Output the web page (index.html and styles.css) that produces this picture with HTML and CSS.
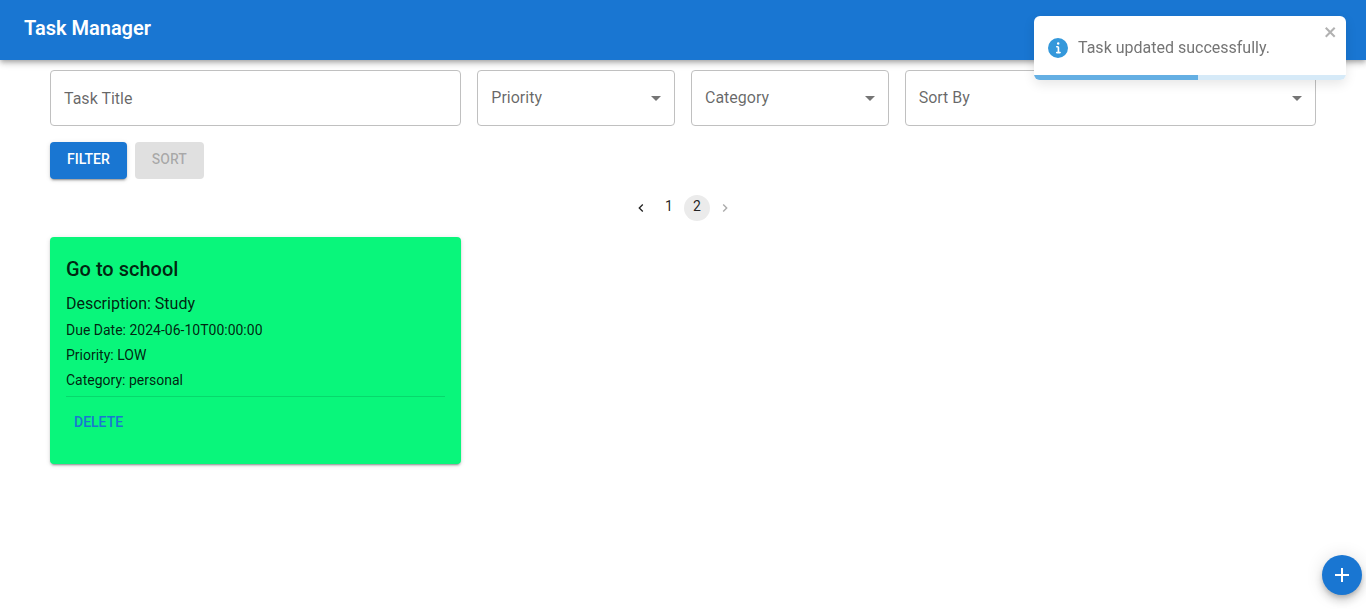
FILE: index.html
```html
<!DOCTYPE html>
<html lang="en">
<head>
<meta charset="utf-8">
<meta name="viewport" content="width=device-width, initial-scale=1">
<title>Task Manager</title>
<link rel="stylesheet" href="styles.css">
</head>
<body>
<header class="app-bar">
  <h1 class="app-title">Task Manager</h1>
</header>

<main class="content">
  <form class="filters">
    <div class="fields">
      <input class="field field-wide" type="text" placeholder="Task Title" aria-label="Task Title">
      <div class="select">
        <select class="field" aria-label="Priority">
          <option>Priority</option>
        </select>
        <svg class="caret" viewBox="0 0 24 24" aria-hidden="true"><path d="M7 10l5 5 5-5z"/></svg>
      </div>
      <div class="select">
        <select class="field" aria-label="Category">
          <option>Category</option>
        </select>
        <svg class="caret" viewBox="0 0 24 24" aria-hidden="true"><path d="M7 10l5 5 5-5z"/></svg>
      </div>
      <div class="select field-wide">
        <select class="field" aria-label="Sort By">
          <option>Sort By</option>
        </select>
        <svg class="caret" viewBox="0 0 24 24" aria-hidden="true"><path d="M7 10l5 5 5-5z"/></svg>
      </div>
    </div>
    <div class="actions">
      <button class="button button-primary" type="button">FILTER</button>
      <button class="button" type="button" disabled>SORT</button>
    </div>
  </form>

  <nav class="pagination" aria-label="Pagination">
    <button class="page" type="button" aria-label="Previous page">
      <svg class="chevron" viewBox="0 0 24 24" aria-hidden="true"><path d="M15.41 7.41L14 6l-6 6 6 6 1.41-1.41L10.83 12z"/></svg>
    </button>
    <button class="page" type="button">1</button>
    <button class="page page-current" type="button" aria-current="page">2</button>
    <button class="page" type="button" aria-label="Next page" disabled>
      <svg class="chevron" viewBox="0 0 24 24" aria-hidden="true"><path d="M10 6L8.59 7.41 13.17 12l-4.58 4.59L10 18l6-6z"/></svg>
    </button>
  </nav>

  <section class="tasks">
    <article class="task">
      <h2 class="task-title">Go to school</h2>
      <p class="task-description">Description: Study</p>
      <p class="task-detail">Due Date: 2024-06-10T00:00:00</p>
      <p class="task-detail">Priority: LOW</p>
      <p class="task-detail">Category: personal</p>
      <div class="task-actions">
        <button class="text-button" type="button">DELETE</button>
      </div>
    </article>
  </section>
</main>

<button class="fab" type="button" aria-label="Add task">
  <svg class="fab-icon" viewBox="0 0 24 24" aria-hidden="true"><path d="M19 13h-6v6h-2v-6H5v-2h6V5h2v6h6v2z"/></svg>
</button>

<div class="toast" role="alert">
  <div class="toast-body">
    <svg class="toast-icon" viewBox="0 0 24 24" aria-hidden="true"><path d="M12 0a12 12 0 1 0 12 12A12.013 12.013 0 0 0 12 0zm.25 5a1.5 1.5 0 1 1-1.5 1.5 1.5 1.5 0 0 1 1.5-1.5zm2.25 13.5h-4a1 1 0 0 1 0-2h.75a.25.25 0 0 0 .25-.25v-4.5a.25.25 0 0 0-.25-.25h-.75a1 1 0 0 1 0-2h1a2 2 0 0 1 2 2v4.75a.25.25 0 0 0 .25.25h.75a1 1 0 1 1 0 2z"/></svg>
    <span>Task updated successfully.</span>
  </div>
  <button class="toast-close" type="button" aria-label="Close">
    <svg class="toast-close-icon" viewBox="0 0 14 16" aria-hidden="true"><path fill-rule="evenodd" d="M7.71 8.23l3.75 3.75-1.48 1.48-3.75-3.75-3.75 3.75L1 11.98l3.75-3.75L1 4.48 2.48 3l3.75 3.75L9.98 3l1.48 1.48-3.75 3.75z"/></svg>
  </button>
  <div class="toast-track"><div class="toast-progress" style="width: 52.5%"></div></div>
</div>
</body>
</html>
```

FILE: styles.css
```css
*,
*::before,
*::after {
  box-sizing: border-box;
}

body {
  margin: 0;
  background: #fff;
  color: rgba(0, 0, 0, 0.87);
  font-family: Roboto, Arial, sans-serif;
  font-size: 16px;
  line-height: 24px;
}

button,
input,
select {
  font: inherit;
}

button {
  padding: 0;
  border: 0;
  background: none;
  color: inherit;
  cursor: pointer;
}

button:disabled {
  cursor: default;
}

.app-bar {
  padding: 12px 24px 16px;
  background: #1976d2;
  color: #fff;
  box-shadow: 0 2px 4px -1px rgba(0, 0, 0, 0.2), 0 4px 5px rgba(0, 0, 0, 0.14), 0 1px 10px rgba(0, 0, 0, 0.12);
}

.app-title {
  margin: 0;
  font-size: 20px;
  font-weight: 600;
  line-height: 32px;
}

.content {
  padding: 10px 50px 32px;
}

.fields {
  display: grid;
  grid-template-columns: repeat(12, 1fr);
  gap: 16px;
}

.select {
  position: relative;
  grid-column: span 2;
}

.fields > .field-wide {
  grid-column: span 4;
}

.field {
  display: block;
  width: 100%;
  height: 56px;
  padding: 0 32px 0 13px;
  border: 1px solid #c0c0c0;
  border-radius: 4px;
  background: #fff;
  color: rgba(0, 0, 0, 0.6);
  appearance: none;
}

.field::placeholder {
  color: rgba(0, 0, 0, 0.6);
  opacity: 1;
}

.caret {
  position: absolute;
  top: 16px;
  right: 7px;
  width: 24px;
  height: 24px;
  fill: rgba(0, 0, 0, 0.54);
  pointer-events: none;
}

.actions {
  display: flex;
  gap: 8px;
  margin-top: 16px;
}

.button {
  padding: 5px 17px 8px;
  border-radius: 4px;
  background: #e0e0e0;
  color: rgba(0, 0, 0, 0.26);
  font-size: 14px;
  font-weight: 500;
}

.button-primary {
  background: #1976d2;
  color: #fff;
  box-shadow: 0 3px 1px -2px rgba(0, 0, 0, 0.2), 0 2px 2px rgba(0, 0, 0, 0.14), 0 1px 5px rgba(0, 0, 0, 0.12);
}

.pagination {
  display: flex;
  justify-content: center;
  gap: 2px;
  margin-top: 16px;
}

.page {
  display: grid;
  place-items: center;
  width: 26px;
  height: 26px;
  padding-bottom: 4px;
  border-radius: 13px;
  font-size: 14px;
  line-height: 20px;
}

.page-current {
  background: #ebebeb;
}

.page:disabled {
  opacity: 0.38;
}

.page:has(.chevron) {
  padding: 0;
}

.chevron {
  width: 16px;
  height: 16px;
  fill: currentColor;
}

.tasks {
  display: grid;
  grid-template-columns: repeat(3, 1fr);
  gap: 16px;
  margin-top: 16px;
}

.task {
  padding: 16px 16px 24px;
  border-radius: 4px;
  background: #09f67b;
  box-shadow: 0 3px 1px -2px rgba(0, 0, 0, 0.2), 0 2px 2px rgba(0, 0, 0, 0.14), 0 1px 5px rgba(0, 0, 0, 0.12);
}

.task-title {
  margin: 0 0 7px;
  font-size: 20px;
  font-weight: 500;
  line-height: 32px;
}

.task-description {
  margin: 0 0 2px;
}

.task-detail {
  margin: 0;
  font-size: 14px;
  line-height: 25px;
}

.task-actions {
  margin-top: 3px;
  padding-top: 7px;
  border-top: 1px solid rgba(0, 0, 0, 0.12);
}

.text-button {
  padding: 6px 8px;
  border-radius: 4px;
  color: #1976d2;
  font-size: 14px;
  font-weight: 500;
}

.fab {
  position: fixed;
  right: 4px;
  bottom: 14px;
  display: grid;
  place-items: center;
  width: 40px;
  height: 40px;
  border-radius: 50%;
  background: #1976d2;
  color: #fff;
  box-shadow: 0 3px 5px -1px rgba(0, 0, 0, 0.2), 0 6px 10px rgba(0, 0, 0, 0.14), 0 1px 18px rgba(0, 0, 0, 0.12);
}

.fab-icon {
  width: 24px;
  height: 24px;
  fill: currentColor;
}

.toast {
  position: fixed;
  top: 16px;
  right: 20px;
  width: 312px;
  overflow: hidden;
  border-radius: 6px;
  background: #fff;
  color: #757575;
  box-shadow: 0 4px 12px rgba(0, 0, 0, 0.1);
}

.toast-body {
  display: flex;
  align-items: center;
  gap: 10px;
  padding: 20px 32px 15px 14px;
}

.toast-icon {
  width: 20px;
  height: 20px;
  fill: #3498db;
}

.toast-close {
  position: absolute;
  top: 8px;
  right: 8px;
}

.toast-close-icon {
  display: block;
  width: 14px;
  height: 16px;
  fill: #000;
  opacity: 0.3;
}

.toast-track {
  height: 5px;
  background: #d6eaf8;
}

.toast-progress {
  height: 5px;
  background: #64afe3;
}
```
